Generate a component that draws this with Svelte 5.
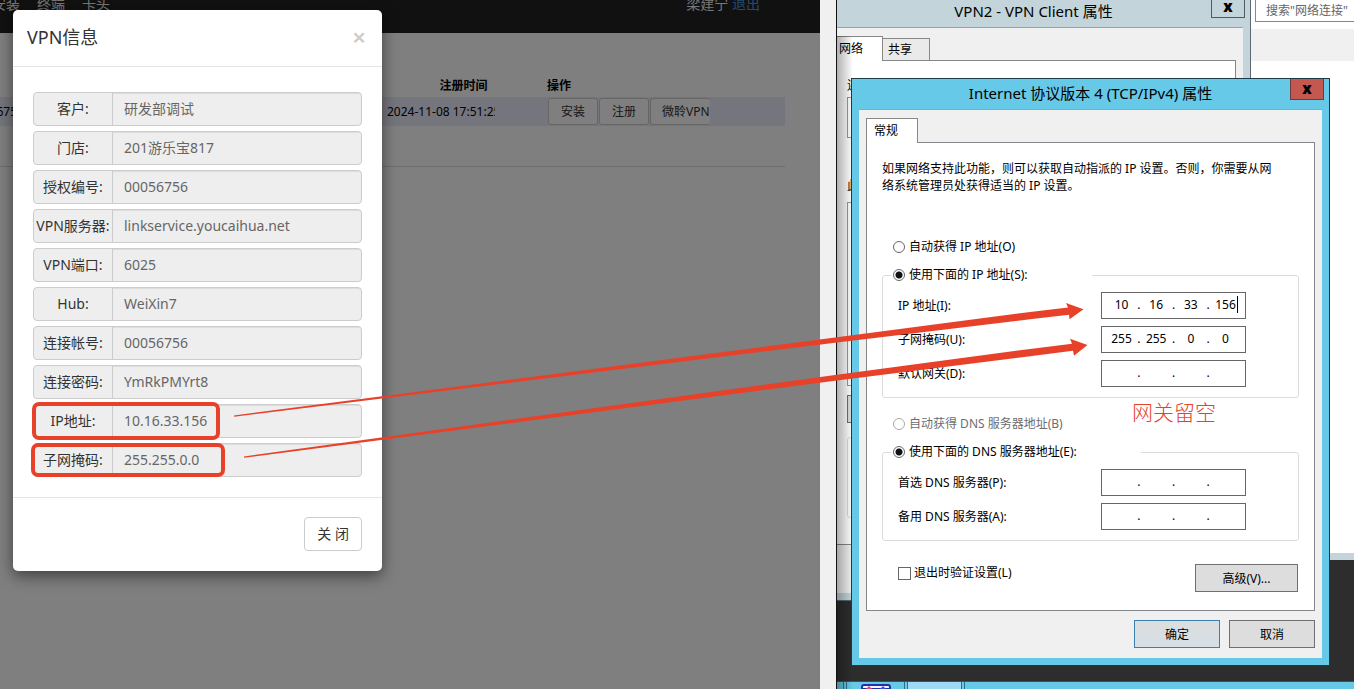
<script>
    const vpnInfo = [
        { id: 'customer', label: '客户:', value: '研发部调试' },
        { id: 'store', label: '门店:', value: '201游乐宝817' },
        { id: 'license', label: '授权编号:', value: '00056756' },
        { id: 'server', label: 'VPN服务器:', value: 'linkservice.youcaihua.net' },
        { id: 'port', label: 'VPN端口:', value: '6025' },
        { id: 'hub', label: 'Hub:', value: 'WeiXin7' },
        { id: 'account', label: '连接帐号:', value: '00056756' },
        { id: 'password', label: '连接密码:', value: 'YmRkPMYrt8' },
        { id: 'ip', label: 'IP地址:', value: '10.16.33.156' },
        { id: 'mask', label: '子网掩码:', value: '255.255.0.0' }
    ]

    const ipFields = [
        { label: 'IP 地址(I):', octets: ['10', '16', '33', '156'], caret: true },
        { label: '子网掩码(U):', octets: ['255', '255', '0', '0'] },
        { label: '默认网关(D):', octets: ['', '', '', ''] }
    ]

    const dnsFields = [
        { label: '首选 DNS 服务器(P):', octets: ['', '', '', ''] },
        { label: '备用 DNS 服务器(A):', octets: ['', '', '', ''] }
    ]

    let ipMode = $state('manual')
    let dnsMode = $state('manual')
    let validate = $state(false)
</script>

{#snippet addressRow(field)}
    <div class="address-row" role="group" aria-label={field.label}>
        <span>{field.label}</span>
        <div class="address-box">
            {#each field.octets as octet, i}
                {#if i > 0}<span class="dot">.</span>{/if}
                <input type="text" maxlength="3" value={octet} aria-label="{field.label} {i + 1}" />
            {/each}
            {#if field.caret}<i class="caret"></i>{/if}
        </div>
    </div>
{/snippet}

<div class="screen">
    <section class="web">
        <nav>
            <a href="#install">安装</a>
            <a href="#terminal">终端</a>
            <a href="#card">卡头</a>
            <span class="user">梁建宁 <a href="#logout">退出</a></span>
        </nav>
        <div class="list">
            <table>
                <thead>
                    <tr>
                        <th class="col-code"></th>
                        <th class="col-time">注册时间</th>
                        <th class="col-action">操作</th>
                    </tr>
                </thead>
                <tbody>
                    <tr>
                        <td>00056756</td>
                        <td><span class="time">2024-11-08 17:51:25</span></td>
                        <td>
                            <div class="actions">
                                <button>安装</button>
                                <button>注册</button>
                                <button class="last">微聆VPN</button>
                            </div>
                        </td>
                    </tr>
                </tbody>
            </table>
        </div>
        <div class="backdrop"></div>

        <div class="modal" role="dialog" aria-label="VPN信息">
            <header>
                <h4>VPN信息</h4>
                <button class="close" aria-label="关闭">×</button>
            </header>
            <div class="modal-body">
                {#each vpnInfo as row}
                    <div class="input-group">
                        <label for={row.id}>{row.label}</label>
                        <input id={row.id} type="text" value={row.value} readonly />
                    </div>
                {/each}
            </div>
            <footer>
                <button>关 闭</button>
            </footer>
        </div>
    </section>

    <section class="desktop">
        <div class="explorer">
            <input type="text" placeholder={'搜索"网络连接"'} aria-label="搜索" />
            <div class="toolbar"></div>
        </div>

        <div class="window vpn">
            <div class="title">VPN2 - VPN Client 属性</div>
            <button class="win-close" aria-label="关闭">x</button>
            <div class="client">
                <div class="tabs">
                    <button class="tab active">网络</button>
                    <button class="tab">共享</button>
                </div>
                <div class="panel">
                    <span>连接</span>
                    <div class="adapter"></div>
                    <span>此项</span>
                    <div class="items"></div>
                    <div class="item-button"></div>
                    <div class="description"></div>
                </div>
            </div>
        </div>
        <div class="edge-shade"></div>

        <div class="window tcp">
            <div class="title">Internet 协议版本 4 (TCP/IPv4) 属性</div>
            <button class="win-close" aria-label="关闭">x</button>
            <div class="client">
                <div class="tabs">
                    <button class="tab active">常规</button>
                </div>
                <div class="panel">
                    <p>如果网络支持此功能，则可以获取自动指派的 IP 设置。否则，你需要从网络系统管理员处获得适当的 IP 设置。</p>

                    <label class="radio first">
                        <input type="radio" name="ip" value="auto" bind:group={ipMode} />自动获得 IP 地址(O)
                    </label>
                    <fieldset>
                        <legend>
                            <label class="radio">
                                <input type="radio" name="ip" value="manual" bind:group={ipMode} />使用下面的 IP 地址(S):
                            </label>
                        </legend>
                        {#each ipFields as field}
                            {@render addressRow(field)}
                        {/each}
                    </fieldset>

                    <label class="radio second disabled">
                        <input type="radio" name="dns" value="auto" bind:group={dnsMode} disabled />自动获得 DNS 服务器地址(B)
                    </label>
                    <fieldset>
                        <legend>
                            <label class="radio">
                                <input type="radio" name="dns" value="manual" bind:group={dnsMode} />使用下面的 DNS 服务器地址(E):
                            </label>
                        </legend>
                        {#each dnsFields as field}
                            {@render addressRow(field)}
                        {/each}
                    </fieldset>

                    <div class="options">
                        <label class="check">
                            <input type="checkbox" bind:checked={validate} />退出时验证设置(L)
                        </label>
                        <button class="win-button advanced">高级(V)...</button>
                    </div>
                </div>
                <div class="dialog-buttons">
                    <button class="win-button default">确定</button>
                    <button class="win-button">取消</button>
                </div>
            </div>
            <div class="note">网关留空</div>
        </div>

        <div class="taskbar">
            <span class="task stub"></span>
            <span class="task app">
                <svg width="30" height="5" viewBox="0 0 30 5">
                    <path d="M1 5V3Q1 1 3 1H27Q29 1 29 3V5Z" fill="#f4f4ff" stroke="#2430a8" stroke-width="2" />
                    <path d="M5 5L8 2L11 5Z" fill="#f0407a" />
                    <path d="M19 5L22 2L25 5Z" fill="#3a50f0" />
                </svg>
            </span>
            <span class="task current"></span>
            <span class="task rest"></span>
        </div>
    </section>

    <!-- red marks linking the two dialogs -->
    <svg class="marks" viewBox="0 0 1354 689" preserveAspectRatio="none" aria-hidden="true">
        <rect x="34" y="404" width="184" height="34" rx="5" />
        <rect x="33" y="445" width="190" height="30" rx="5" />
        <path d="M234 415.4L835 337.5L1030 312L1068 307.5L1066 303L1083.5 309.3L1069.5 319.3L1069 314.8L1030 319.2L835 342.7L234 416.8Z" />
        <path d="M244 456.4L835 375L1030 349L1072 343.7L1070 338.7L1087.5 344.9L1074 355.7L1073 350.8L1030 356.2L835 380.8L244 457.8Z" />
    </svg>
</div>

<style>
    :global(body) {
        margin: 0;
    }

    .screen {
        position: relative;
        display: grid;
        grid-template-columns: minmax(0, 820fr) minmax(0, 518fr);
        column-gap: 16px;
        min-height: 100vh;
        background: #f0f0f0;
        font-family: 'Noto Sans', 'Noto Sans CJK SC', sans-serif;
        font-size: 12px;
        color: #000;
        overflow: hidden;
    }

    .screen * {
        box-sizing: border-box;
    }

    button,
    input {
        font: inherit;
        color: inherit;
        margin: 0;
    }

    button {
        padding: 0;
    }

    a {
        text-decoration: none;
    }

    /* web page */
    .web {
        position: relative;
        background: #fff;
        overflow: hidden;
    }

    nav {
        display: flex;
        align-items: center;
        gap: 17px;
        height: 58px;
        margin-top: -25px;
        padding-right: 60px;
        background: #222;
        color: #eee;
        font-size: 14px;
        line-height: 20px;
    }

    nav a {
        color: #eee;
    }

    nav > a:first-child {
        margin-left: -8px;
    }

    .user {
        margin-left: auto;
    }

    .user a {
        color: #4a94dc;
    }

    .list {
        margin: 0 35px 0 -35px;
        padding: 41px 0 40px;
        border-bottom: 1px solid #ddd;
    }

    table {
        width: 100%;
        border-collapse: collapse;
        table-layout: fixed;
    }

    th,
    td {
        padding: 0 4px;
        text-align: left;
    }

    th {
        height: 23px;
        line-height: 20px;
    }

    td {
        height: 29px;
    }

    tbody tr {
        background: #ebebfb;
    }

    .col-code {
        width: 418px;
    }

    .col-time {
        width: 161px;
        text-align: center;
    }

    .col-action {
        padding-left: 3px;
    }

    .time {
        display: block;
        width: 108px;
        line-height: 20px;
        overflow: hidden;
        white-space: nowrap;
    }

    .actions {
        display: flex;
        gap: 1px;
    }

    .actions button {
        height: 27px;
        padding: 0 12px 1px;
        background: #fff;
        border: 1px solid #ccc;
        border-radius: 3px;
        color: #333;
    }

    .actions .last {
        padding: 0 0 1px 11px;
        border-right: none;
    }

    .backdrop {
        position: absolute;
        inset: 0;
        background: rgba(0, 0, 0, 0.5);
    }

    .modal {
        position: absolute;
        left: 13px;
        top: 10px;
        width: 369px;
        background: #fff;
        border-radius: 5px;
        box-shadow: 0 5px 15px rgba(0, 0, 0, 0.5);
        color: #333;
        font-size: 14px;
    }

    header {
        display: flex;
        align-items: center;
        justify-content: space-between;
        height: 57px;
        padding: 0 16px 3px 14px;
        border-bottom: 1px solid #e5e5e5;
    }

    h4 {
        margin: 0;
        font-size: 18px;
        font-weight: 400;
        line-height: 24px;
    }

    .close {
        background: none;
        border: none;
        color: #ccc;
        font-size: 24px;
        font-weight: 600;
        line-height: 20px;
    }

    .modal-body {
        display: flex;
        flex-direction: column;
        gap: 5px;
        padding: 25px 20px 20px;
    }

    .input-group {
        display: flex;
        height: 34px;
        border: 1px solid #ccc;
        border-radius: 4px;
        background: #eee;
        overflow: hidden;
    }

    .input-group label {
        flex: 0 0 79px;
        border-right: 1px solid #ccc;
        line-height: 32px;
        text-align: center;
        white-space: nowrap;
    }

    .input-group input {
        flex: 1;
        min-width: 0;
        padding: 0 11px 2px;
        border: none;
        background: none;
        box-shadow: inset 0 1px 1px rgba(0, 0, 0, 0.075);
        color: #666;
        outline: none;
    }

    footer {
        display: flex;
        justify-content: flex-end;
        padding: 19px 20px 20px;
        border-top: 1px solid #e5e5e5;
    }

    footer button {
        height: 34px;
        padding: 0 12px 2px;
        background: #fff;
        border: 1px solid #ccc;
        border-radius: 4px;
    }

    /* remote desktop */
    .desktop {
        position: relative;
        display: flex;
        flex-direction: column;
        border-left: 1px solid #111;
        background: #2d2d2d;
        overflow: hidden;
    }

    .explorer {
        display: flex;
        flex-direction: column;
        align-items: flex-end;
        height: 560px;
        background: #fff;
        border-bottom: 7px solid #c3d5da;
    }

    .explorer input {
        width: 105px;
        height: 22px;
        margin-right: -6px;
        padding: 0 10px 1px;
        border: 1px solid #888;
        border-top: none;
        background: #fff;
    }

    .explorer input::placeholder {
        color: #666;
        opacity: 1;
    }

    .toolbar {
        width: 100%;
        height: 32px;
        margin-top: 7px;
        background: #f0f0f0;
    }

    .window {
        position: absolute;
        border: 1px solid #1e3a46;
        padding: 0 7px 7px;
    }

    .title {
        height: 30px;
        font-size: 15px;
        line-height: 29px;
        text-align: center;
        white-space: nowrap;
    }

    .win-close {
        position: absolute;
        top: 0;
        right: 5px;
        width: 34px;
        height: 21px;
        border: 1px solid #4b5c63;
        border-top: none;
        background: #c3d5da;
        font-family: 'Open Sans', sans-serif;
        font-size: 15px;
        font-weight: 800;
        line-height: 14px;
        padding-bottom: 2px;
    }

    .client {
        background: #f0f0f0;
        border-top: 1px solid #8fa5ad;
        padding: 8px 7px 10px;
    }

    .tabs {
        display: flex;
        align-items: flex-end;
    }

    .tab {
        width: 47px;
        height: 22px;
        border: 1px solid #888;
        border-left: none;
        border-bottom: none;
        background: #eaeaea;
        padding: 0 8px 1px 5px;
        text-align: left;
    }

    .tab.active {
        position: relative;
        width: 52px;
        height: 25px;
        margin-bottom: -1px;
        padding: 0 7px 3px;
        border-left: 1px solid #888;
        background: #fff;
    }

    .panel {
        background: #fff;
        border: 1px solid #85858c;
    }

    .vpn {
        left: -21px;
        top: -4px;
        width: 435px;
        background: #c3d5da;
        border-color: #5b686d;
    }

    .vpn .client {
        padding-bottom: 48px;
    }

    .vpn .panel {
        display: flex;
        flex-direction: column;
        height: 485px;
        padding: 15px;
        line-height: 20px;
    }

    .adapter,
    .items,
    .description {
        border: 1px solid #999;
    }

    .adapter {
        height: 41px;
        margin: 1px 0 38px;
    }

    .items {
        height: 184px;
        margin-top: 6px;
    }

    .item-button {
        width: 100px;
        height: 28px;
        margin: 9px 0 14px;
        border: 1px solid #707070;
        background: #ddd;
    }

    .description {
        height: 81px;
        border-color: #dcdcdc;
        border-radius: 3px;
    }

    .edge-shade {
        position: absolute;
        left: 0;
        top: 36px;
        bottom: 0;
        width: 16px;
        background: linear-gradient(to right, rgba(0, 0, 0, 0.3), rgba(0, 0, 0, 0));
    }

    .tcp {
        left: 14px;
        top: 78px;
        width: 479px;
        background: #67c9e8;
    }

    .tcp .win-close {
        background: #c4574f;
        border-color: #6b3a3a;
    }

    .tcp .panel {
        padding: 17px 15px 18px;
    }

    p {
        margin: 0;
        padding-right: 20px;
        line-height: 17px;
    }

    .radio {
        display: flex;
        align-items: center;
        gap: 4px;
        height: 20px;
        line-height: 20px;
        white-space: nowrap;
    }

    .radio.first {
        margin: 43px 0 8px 11px;
    }

    .radio.second {
        margin: 16px 0 8px 11px;
    }

    .radio.disabled {
        color: #6d6d6d;
    }

    .radio input {
        appearance: none;
        width: 12px;
        height: 12px;
        border: 1px solid #666;
        border-radius: 50%;
        background: #fff;
    }

    .radio input:checked {
        background: radial-gradient(circle, #111 0 3px, #fff 4px);
    }

    .radio input:disabled {
        border-color: #aaa;
    }

    fieldset {
        min-width: 0;
        margin: 0;
        padding: 7px 52px 10px 15px;
        border: 1px solid #dcdcdc;
        border-radius: 3px;
    }

    legend {
        margin-left: -7px;
        padding: 0 64px 0 2px;
    }

    .address-row {
        display: flex;
        align-items: center;
        justify-content: space-between;
        line-height: 16px;
    }

    .address-row + .address-row {
        margin-top: 7px;
    }

    .address-box {
        position: relative;
        display: flex;
        width: 145px;
        height: 27px;
        padding: 0 4px 2px;
        border: 1px solid #666;
        line-height: 24px;
    }

    .address-box input {
        width: 31px;
        padding: 0;
        border: none;
        background: none;
        text-align: center;
        outline: none;
    }

    .dot {
        width: 4px;
        text-align: center;
    }

    .caret {
        position: absolute;
        top: 3px;
        right: 7px;
        width: 1px;
        height: 17px;
        background: #000;
    }

    .options {
        display: flex;
        align-items: flex-start;
        justify-content: space-between;
        margin-top: 23px;
        padding: 0 1px 0 16px;
    }

    .check {
        display: flex;
        align-items: center;
        gap: 3px;
        line-height: 18px;
    }

    .check input {
        appearance: none;
        width: 13px;
        height: 13px;
        border: 1px solid #666;
        background: #fff;
    }

    .win-button {
        width: 86px;
        height: 28px;
        border: 1px solid #707070;
        background: #ddd;
    }

    .win-button.advanced {
        width: 103px;
    }

    .win-button.default {
        border-color: #3c7fb1;
        background: linear-gradient(#ddd, #d5dfe6);
    }

    .dialog-buttons {
        display: flex;
        justify-content: flex-end;
        gap: 9px;
        margin-top: 9px;
    }

    .note {
        position: absolute;
        left: 280px;
        top: 319px;
        color: #e8412a;
        font-size: 21px;
        font-weight: 300;
        line-height: 28px;
    }

    .taskbar {
        display: flex;
        gap: 2px;
        height: 8px;
        margin-top: auto;
        border-top: 1px solid #3b5560;
        background: #67c9e8;
    }

    .task {
        border-right: 1px solid #2f6f86;
    }

    .task.stub {
        width: 7px;
    }

    .task.app {
        display: flex;
        justify-content: center;
        align-items: flex-end;
        width: 59px;
        border-left: 1px solid #2f6f86;
    }

    .task.current {
        width: 55px;
        border-left: 1px solid #2f6f86;
        background: #9fdaf5;
    }

    .task.rest {
        flex: 1;
        border-left: 1px solid #2f6f86;
        border-right: none;
    }

    .marks {
        position: absolute;
        inset: 0;
        width: 100%;
        height: 100%;
        pointer-events: none;
    }

    .marks rect {
        fill: none;
        stroke: #e8412a;
        stroke-width: 4;
    }

    .marks path {
        fill: #e8412a;
    }
</style>
